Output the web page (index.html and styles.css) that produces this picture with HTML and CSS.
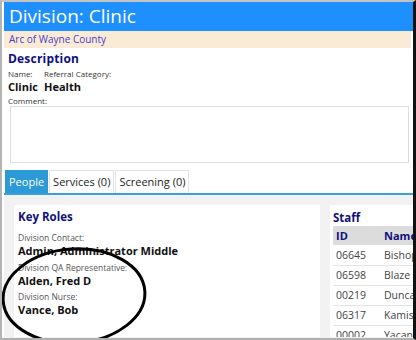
FILE: index.html
```html
<!DOCTYPE html>
<html>
<head>
<meta charset="utf-8">
<link rel="stylesheet" href="styles.css">
</head>
<body>
<div class="screen">
  <div class="title">Division: Clinic</div>
  <div class="org">Arc of Wayne County</div>
  <div class="desc">
    <div class="h-desc">Description</div>
    <div class="fields">
      <div class="field"><div class="lbl">Name:</div><div class="val">Clinic</div></div>
      <div class="field"><div class="lbl">Referral Category:</div><div class="val">Health</div></div>
    </div>
    <div class="lbl">Comment:</div>
    <div class="comment"></div>
  </div>
  <div class="tabs">
    <div class="tab active">People</div>
    <div class="tab">Services (0)</div>
    <div class="tab">Screening (0)</div>
  </div>
  <div class="panel">
    <div class="card roles">
      <div class="card-h">Key Roles</div>
      <div class="role"><div class="rlbl">Division Contact:</div><div class="rval">Admin, Administrator Middle</div></div>
      <div class="role"><div class="rlbl">Division QA Representative:</div><div class="rval">Alden, Fred D</div></div>
      <div class="role"><div class="rlbl">Division Nurse:</div><div class="rval">Vance, Bob</div></div>
    </div>
    <div class="card staff">
      <div class="card-h">Staff</div>
      <table class="grid">
        <thead><tr><th class="cid">ID</th><th>Name</th></tr></thead>
        <tbody>
          <tr><td class="cid">06645</td><td>Bishop</td></tr>
          <tr><td class="cid">06598</td><td>Blaze</td></tr>
          <tr><td class="cid">00219</td><td>Duncan</td></tr>
          <tr><td class="cid">06317</td><td>Kamish</td></tr>
          <tr><td class="cid">00002</td><td>Yacano</td></tr>
        </tbody>
      </table>
    </div>
  </div>
  <svg class="circle" width="416" height="340" viewBox="0 0 416 340">
    <ellipse cx="74" cy="296" rx="71" ry="47" transform="rotate(-4 74 296)" fill="none" stroke="#000" stroke-width="3"/>
  </svg>
</div>
</body>
</html>
```
FILE: styles.css
```css
* { box-sizing: border-box; }
html, body { margin: 0; padding: 0; background: #fff; }
body { font-family: "Open Sans", "Noto Sans", sans-serif; }
.screen {
  position: relative;
  width: 416px;
  height: 340px;
  overflow: hidden;
  border-top: 2px solid #c4c4c4;
  border-left: 2px solid #b4b4b4;
  border-right: 3px solid #111;
  border-bottom: 2px solid #b0b0b0;
  padding-left: 2px;
  background: #fff;
}
.title {
  height: 29px;
  background: #1e8fff;
  color: #fff;
  font-size: 19px;
  line-height: 28px;
  padding-left: 5px;
}
.org {
  height: 17px;
  background: #faebd7;
  color: #4a3cc8;
  font-size: 10px;
  line-height: 17px;
  padding-left: 5px;
  margin-right: 2px;
}
.desc { padding: 3px 2px 0 4px; margin-right: 2px; }
.h-desc { color: #0f0f80; font-weight: 700; font-size: 12px; line-height: 16px; letter-spacing: 0.2px; }
.fields { display: flex; gap: 6px; margin-top: 1px; }
.field { display: flex; flex-direction: column; }
.lbl { font-size: 8px; color: #333; line-height: 11px; }
.val { font-size: 11px; font-weight: 700; color: #111; line-height: 15px; }
.desc > .lbl { margin-top: 1px; }
.comment { height: 57px; border: 1px solid #ddd; margin: 0 0 0 2px; }
.tabs {
  display: flex;
  gap: 1px;
  margin-top: 7px;
  padding-left: 1px;
  border-bottom: 2px solid #3aa0dc;
}
.tab {
  font-size: 11px;
  line-height: 22px;
  height: 23px;
  padding: 0 3px;
  color: #222;
  border: 1px solid #e2e2e2;
  border-bottom: none;
  background: #fff;
}
.tab.active { background: #2b9ad6; color: #fff; border-color: #2b9ad6; }
.panel {
  display: flex;
  gap: 10px;
  background: #f2f2f2;
  padding: 10px 0 8px 10px;
  height: 150px;
}
.card { background: #fff; }
.roles { width: 306px; padding: 4px 4px 0 4px; }
.card-h { color: #0f0f80; font-weight: 700; font-size: 11.5px; line-height: 16px; }
.role { margin-top: 3.5px; }
.card-h + .role { margin-top: 7px; }
.rlbl { font-size: 8.5px; color: #555; line-height: 11px; }
.rval { font-size: 11px; font-weight: 700; color: #111; line-height: 15px; }
.staff { flex: 1; padding: 5px 0 0 3px; overflow: hidden; }
.grid { border-collapse: collapse; width: 100px; font-size: 10.5px; }
.grid th {
  background: #dcdcdc;
  color: #0f0f80;
  font-weight: 700;
  text-align: left;
  height: 19px;
  padding: 0 3px;
  font-size: 11px;
}
.grid td { height: 20px; color: #444; border-bottom: 1px solid #e4e4e4; padding: 0 3px; white-space: nowrap; }
.grid .cid { width: 48px; }
.circle { position: absolute; left: -2px; top: -2px; pointer-events: none; }
```
